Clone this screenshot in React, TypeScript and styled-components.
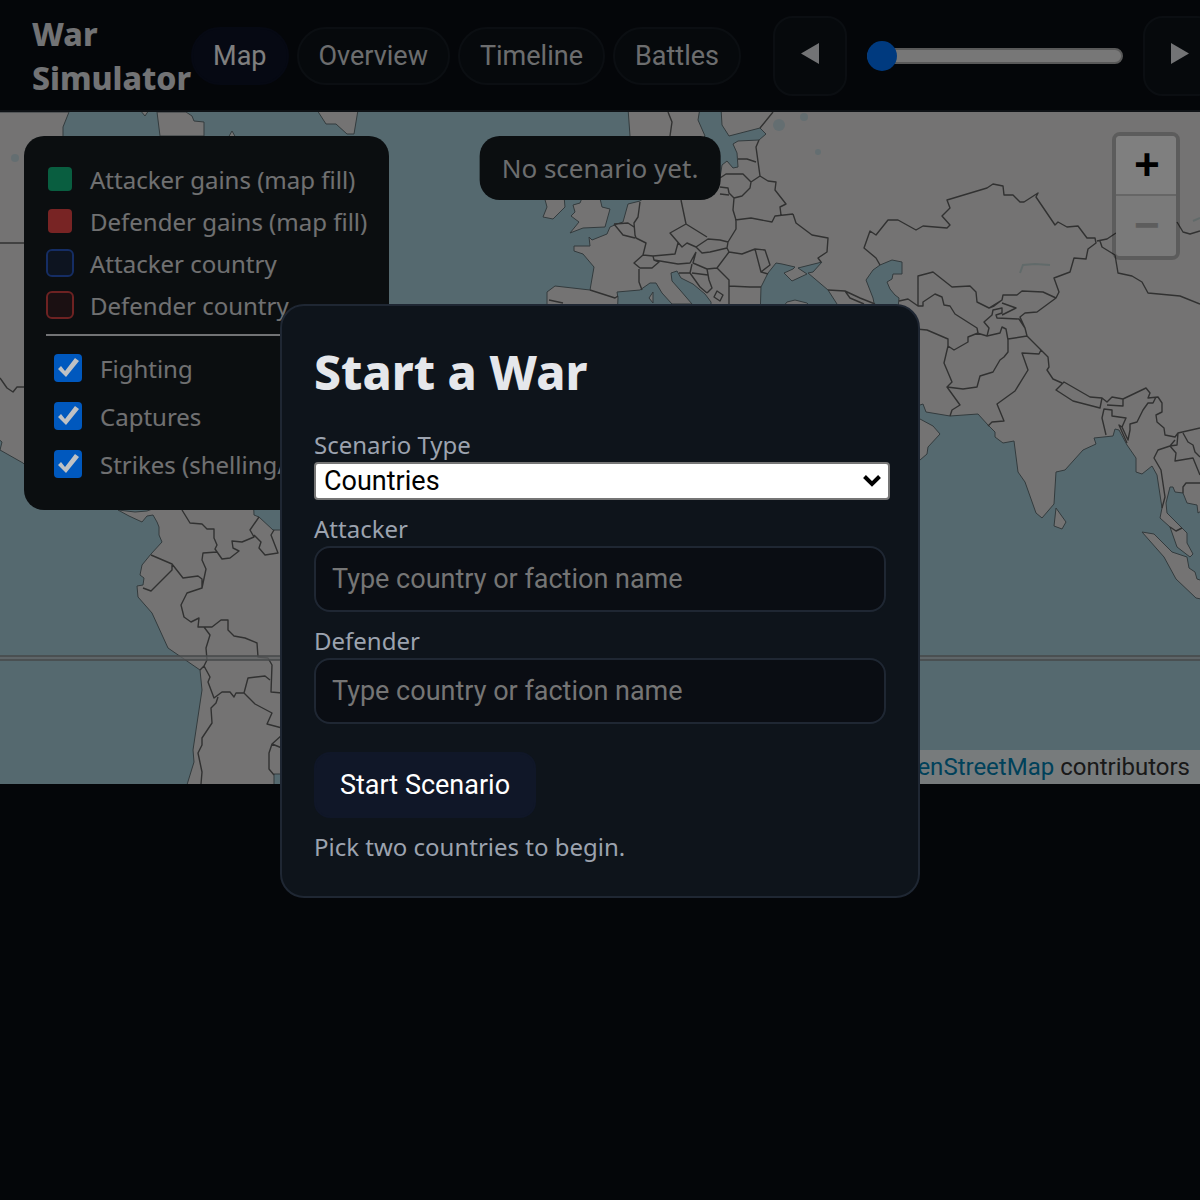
import React, { useState } from "react";
import styled, { createGlobalStyle } from "styled-components";

const ui = `"Noto Sans", sans-serif`;
const control = `Roboto, sans-serif`;

const GlobalStyle = createGlobalStyle`
  * { box-sizing: border-box; }
  html, body { margin: 0; background: #090c12; }
  body {
    min-height: 100vh;
    overflow-x: hidden;
    color: #e5e7eb;
    font-family: ${ui};
    font-size: 24px;
  }
  button, input, select { font-family: ${control}; font-size: 27px; }
`;

const Header = styled.header`
  display: flex;
  align-items: center;
  min-height: 112px;
  padding: 2px 32px 0;
  background: #090c12;
  border-bottom: 2px solid #1f242c;
  overflow: hidden;
`;

const Title = styled.h1`
  flex: 1 1 0;
  margin: 0;
  font-size: 32px;
  font-weight: 800;
  line-height: 44px;
`;

const HeaderControls = styled.div`
  display: flex;
  flex: none;
  align-items: center;
  gap: 32px;
`;

const Nav = styled.nav`
  display: flex;
  gap: 8px;
`;

const NavButton = styled.button<{ $active?: boolean }>`
  height: 58px;
  padding: 0 20px;
  border: 2px solid ${(p) => (p.$active ? "#0c1226" : "#161d24")};
  border-radius: 29px;
  background: ${(p) => (p.$active ? "#0c1226" : "#0c1218")};
  color: ${(p) => (p.$active ? "#ffffff" : "#d8dadd")};
`;

const Playback = styled.div`
  display: flex;
  align-items: center;
  gap: 20px;
`;

const StepButton = styled.button`
  width: 74px;
  height: 80px;
  padding: 0 0 4px;
  border: 2px solid #161d24;
  border-radius: 20px;
  background: #0c1218;
  color: #e5e7eb;
  display: grid;
  place-items: center;
`;

const Range = styled.input`
  appearance: none;
  width: 256px;
  height: 32px;
  margin: 0;
  background: transparent;
  &::-webkit-slider-runnable-track {
    height: 16px;
    border: 2px solid #b2b2b2;
    border-radius: 8px;
    background: #efefef;
  }
  &::-webkit-slider-thumb {
    appearance: none;
    width: 30px;
    height: 30px;
    margin-top: -9px;
    margin-left: -2px;
    border-radius: 50%;
    background: #0075ff;
  }
`;

const MapArea = styled.main`
  position: relative;
  height: 56vh;
  overflow: hidden;
  background: #aad3df;
`;

const MapDrawing = styled.svg`
  display: block;
  width: 100%;
  height: 100%;
`;

const Legend = styled.section`
  position: absolute;
  top: 24px;
  left: 24px;
  padding: 22px;
  border-radius: 20px;
  background: #161c21;
  color: #e0e1e3;
`;

const LegendRow = styled.div`
  display: flex;
  align-items: center;
  gap: 16px;
  height: 42px;
`;

const Swatch = styled.span<{ $fill: string; $line?: string }>`
  width: 28px;
  height: 28px;
  border: 2px solid ${(p) => p.$line ?? "transparent"};
  border-radius: 6px;
  background: ${(p) => p.$fill} padding-box;
`;

const Rule = styled.hr`
  height: 2px;
  margin: 8px 0;
  border: 0;
  background: #e5e7eb;
`;

const CheckRow = styled.label`
  display: flex;
  align-items: center;
  gap: 18px;
  height: 48px;
  padding-left: 8px;
`;

const CheckBox = styled.input`
  appearance: none;
  position: relative;
  z-index: 11;
  width: 28px;
  height: 28px;
  margin: 0;
  border-radius: 4px;
  background: #ffffff;
  &:checked { background: #0058be; }
  &:checked::before {
    content: "";
    display: block;
    width: 28px;
    height: 28px;
    background: #bfc1c4;
    clip-path: polygon(4px 15px, 7px 12px, 11px 17px, 21px 4px, 25px 7px, 12px 23px);
  }
`;

const Status = styled.div`
  position: absolute;
  top: 24px;
  left: 50%;
  transform: translateX(-50%);
  padding: 14px 22px;
  border-radius: 20px;
  background: #161c21;
  color: #d8dadd;
  font-size: 26px;
  line-height: 36px;
  white-space: nowrap;
`;

const ZoomBar = styled.div`
  position: absolute;
  top: 20px;
  right: 20px;
  display: flex;
  flex-direction: column;
  border: 4px solid rgba(0, 0, 0, 0.2);
  border-radius: 8px;
`;

const ZoomButton = styled.button`
  width: 60px;
  height: 60px;
  padding: 4px 0 0 2px;
  border: 0;
  background: #ffffff;
  color: #000000;
  font: bold 44px/56px "Liberation Mono", monospace;
  &:first-child { border-bottom: 2px solid #cccccc; border-radius: 4px 4px 0 0; }
  &:disabled { background: #f4f4f4; color: #bbbbbb; border-radius: 0 0 4px 4px; }
`;

const Attribution = styled.div`
  position: absolute;
  right: 0;
  bottom: 0;
  padding: 0 10px;
  background: rgba(255, 255, 255, 0.8);
  color: #333333;
  font-family: ${control};
  font-size: 24px;
  line-height: 34px;
  white-space: nowrap;
  a { color: #0082b4; text-decoration: none; }
`;

const Backdrop = styled.div`
  position: fixed;
  inset: 0;
  z-index: 10;
  background: rgba(0, 0, 0, 0.5);
`;

const DialogLayer = styled.div`
  position: fixed;
  inset: 0;
  z-index: 12;
  display: grid;
  place-items: center;
  padding-top: 2px;
`;

const Dialog = styled.form`
  width: 640px;
  max-width: 100%;
  padding: 32px;
  border: 2px solid #1f2733;
  border-radius: 24px;
  background: #0e141b;
`;

const DialogTitle = styled.h2`
  margin: 0 0 22px;
  font-size: 48px;
  font-weight: 800;
  line-height: 68px;
`;

const Fields = styled.div`
  display: grid;
  gap: 12px;
`;

const Field = styled.div`
  display: grid;
`;

const FieldLabel = styled.label`
  color: #9ca3af;
  line-height: 34px;
`;

const SelectWrap = styled.div`
  position: relative;
  width: calc(100% + 4px);
  svg {
    position: absolute;
    top: 13px;
    right: 9px;
    pointer-events: none;
  }
`;

const Select = styled.select`
  display: block;
  appearance: none;
  width: 100%;
  height: 38px;
  padding: 0 8px;
  border: 2px solid #767676;
  border-radius: 4px;
  background: #ffffff;
  color: #000000;
`;

const TextInput = styled.input`
  width: 100%;
  height: 66px;
  padding: 0 16px;
  border: 2px solid #1f2733;
  border-radius: 16px;
  background: #0a0d13;
  color: #e5e7eb;
  &::placeholder { color: #757575; }
`;

const SubmitButton = styled.button`
  height: 66px;
  margin: 28px 0 12px;
  padding: 0 24px;
  border: 2px solid #101728;
  border-radius: 16px;
  background: #101728;
  color: #ffffff;
`;

const Hint = styled.p`
  margin: 0;
  color: #9ca3af;
  line-height: 34px;
`;

const land = [
  // North America
  "M-4 112L69 112L63 127L63 136L80 300L40 480L23 463L0 450L2 442L-4 437Z",
  "M140 110L145 116L149 110Z",
  "M157 112L160 136L204 136L204 122L194 121L192 116L186 112Z",
  "M228 138L232 131L236 138Z",
  // Greenland
  "M317 110L326 124L336 124L347 134L354 134L358 110Z",
  // South America
  "M118 510L129 516L142 522L147 516L153 515L157 522L159 527L159 535L162 542L151 554L142 565L140 575L144 578L143 585L137 586L138 597L152 613L168 648L200 670L202 690L193 750L194 762L186 788L274 788L274 774L281 774L290 784L290 530L273 530L259 517L254 515L253 490L160 490L155 508L147 511L135 512Z",
  // Scandinavia
  "M628 108L630 136L640 150L690 150L705 136L698 120L700 108Z",
  // Eurasia
  "M721 108L722 125L729 136L760 128L766 134L759 140L738 141L733 144L737 153L738 167L733 168L727 161L722 165L720 178L700 192L670 196L655 190L640 201L628 204L623 222L617 224L610 227L607 234L592 240L589 237L590 246L574 246L574 251L583 254L594 267L590 290L555 286L547 292L547 320L617 320L618 298L617 292L640 290L650 283L656 283L662 293L672 304L692 304L680 290L672 281L671 273L677 271L681 278L693 284L705 294L711 302L711 320L760 320L761 287L768 273L776 263L782 264L795 267L793 269L784 273L792 281L807 274L798 268L818 263L822 262L813 272L808 273L828 290L837 304L840 420L920 405L923 404L926 412L950 416L978 414L988 425L995 432L995 437L1003 443L1014 441L1018 472L1025 482L1036 513L1042 518L1054 504L1056 472L1065 470L1083 450L1096 444L1094 438L1113 436L1115 429L1119 430L1127 445L1136 458L1136 472L1142 474L1152 466L1157 475L1162 508L1160 518L1170 527L1177 547L1190 557L1193 554L1187 543L1187 533L1182 528L1167 513L1166 503L1170 487L1173 487L1175 492L1183 493L1187 503L1197 505L1198 513L1206 508L1206 108Z",
  // British Isles
  "M582 198L580 203L573 205L575 212L571 216L579 222L570 233L583 228L605 227L610 209L602 207L598 190Z",
  "M544 196L547 207L543 217L553 219L565 207L564 196Z",
  // Corsica and Anatolia
  "M653 292L649 298L653 303Z",
  "M782 308L787 302L795 300L807 303L812 308Z",
  // Arabia
  "M910 414L920 419L933 426L940 434L928 447L927 454L920 460L910 462Z",
  // Sri Lanka and Sumatra
  "M1056 508L1066 522L1062 529L1054 526Z",
  "M1142 532L1154 534L1172 552L1187 557L1189 568L1195 572L1197 579L1206 582L1206 600L1196 598L1176 579L1164 557Z",
].join("");

const caspian =
  "M880 265L892 260L902 262L902 274L893 274L892 279L887 282L890 289L895 295L899 298L898 308L875 308L873 298L866 280L873 270Z";

const borders = [
  // Americas
  "M0 243H30M0 378L7 388L13 392L17 387L24 387",
  "M182 510L190 523L202 524L207 529L214 529L214 538L217 545L215 549L222 559L230 558L239 551L233 548L232 541L242 542L254 537L250 530L259 517",
  "M254 535L261 542L259 548L265 555L278 553L271 535L274 530",
  "M151 555L172 564L183 578L198 576L202 579L202 588L206 569L202 560L203 553L217 552",
  "M172 565L172 570L151 591L143 588",
  "M202 588L187 593L181 605L184 617L191 622L199 618L198 627L212 627L221 620L228 620L228 630L234 636L245 638L257 643L258 657L268 658L272 665L271 692L282 693",
  "M204 627L210 635L206 648L207 660L204 666L200 670M204 666L210 677L208 682L214 698L222 692L230 692L234 697L236 693L244 693L248 678L265 676L270 680",
  "M244 693L255 704L272 713L267 724L282 728",
  "M218 697L216 703L211 708L212 723L202 738L202 745L198 753L202 772L201 784",
  "M282 735L272 744L282 748M272 744L269 753L269 769L274 775",
  // Northern and eastern Europe
  "M668 112L672 122L670 136M760 128L773 112M759 140L756 147L760 176M738 159L747 159L756 162",
  "M720 178L726 174L743 174L751 182L760 176M751 182L750 188L742 196L734 198L729 193L728 188L720 187M720 194L729 195",
  "M734 198L733 210L736 220L736 229L728 242L727 248M735 220L751 218L772 222L775 216L793 214",
  "M760 176L768 181L776 182L775 190L786 204L780 207L781 215M793 214L796 223L812 235L828 238L827 252L818 258L821 262",
  // Central Europe
  "M681 200L686 224L707 237M686 224L670 233L682 247L687 243L696 247L708 239L720 240L728 242L727 248L710 252L702 253L696 247",
  "M696 252L693 263L707 269L717 268L729 252M678 243L675 254L653 256L654 260L678 264L690 263L696 252",
  "M640 202L638 217L634 223L635 235L636 238L646 243L643 255L653 256M614 224L628 223L634 227M614 224L623 235L635 238",
  "M643 255L634 263L640 268L652 268L659 262L654 260M639 269L639 282L642 290M590 290L615 298L618 296M549 300L563 303",
  "M727 248L729 252L742 254L755 249L765 250L770 265L761 272L755 249M761 272L768 274M729 286L750 287L761 287M717 268L729 280L729 304",
  "M707 269L709 280L712 288L707 293M679 273L690 273L692 264M692 273L708 275M690 273L700 287L707 293M717 291L723 295L720 301L714 297Z",
  "M828 290L845 291L860 298L875 304M845 291L850 298L864 304",
  // Kazakhstan
  "M880 265L876 258L870 253L864 248L870 231L876 235L888 220L898 220L916 230L923 226L947 228L950 225L942 216L950 208L947 200L987 188L993 184L1003 186L1004 195L1013 195L1020 202L1024 202L1038 193L1036 197L1055 225L1058 222L1067 227L1078 226L1087 238L1095 238L1096 243L1088 249L1086 259L1074 258L1070 272L1054 278L1059 292L1056 298L1043 292L1022 291L1017 295L1003 295L1002 300L989 308L977 302L976 292L970 286L952 287L933 272L918 276L918 306",
  // Mongolia and China
  "M1097 241L1107 239L1116 233M1177 222L1183 232L1190 234L1200 231M1100 241L1102 247L1115 255L1118 273L1132 276L1142 282L1148 293L1180 296L1200 304",
  // Central Asia
  "M899 301L908 299L918 306L923 306L923 302L935 294L942 297L944 305L950 306L955 314L977 328L978 333L968 337L968 342L954 350L948 346L948 339L927 330L916 329",
  "M948 346L944 363L952 382L947 387L960 405L952 410L950 416M947 387L963 389L977 387L980 376L993 372L1000 360L1004 357L1008 352L1008 340L1006 329L1002 327L1000 333L987 336L977 333",
  "M987 336L989 328L984 322L992 315L993 310L1002 308L1002 313L996 315L997 318L1019 319L1025 328L1027 336L1008 339M1002 303L1016 308L1002 315M1056 298L1037 312L1025 313L1020 317L1025 328M1002 300L994 306L989 308",
  // South Asia
  "M1027 336L1041 350L1048 357L1049 367L1047 370L1053 379L1062 383M1041 350L1039 354L1022 353L1028 370L1015 391L997 404L1004 421L992 422L988 426",
  "M1064 382L1056 390L1073 401L1100 408L1102 398L1090 397ZM1102 398L1107 402L1112 397L1123 399L1123 406L1107 405M1123 399L1146 388L1150 393L1148 398L1158 397L1162 403L1162 412L1156 415L1157 422L1164 428L1165 435L1175 437L1178 433L1200 428",
  "M1156 397L1153 403L1148 403L1143 410L1137 422L1130 424L1130 430L1128 440L1122 427L1126 418L1112 416L1112 410L1104 409L1102 418L1106 435M1122 427L1119 425L1127 443",
  // Southeast Asia
  "M1175 440L1170 446L1158 450L1154 458L1161 470L1165 497L1162 508M1178 433L1177 445L1170 446L1176 453L1175 461L1193 458L1200 475M1183 433L1188 442L1193 445L1195 452L1200 457M1200 483L1186 483L1183 487L1183 493M1170 527L1176 531L1182 528",
].join("");

function WorldMap() {
  return (
    <MapDrawing viewBox="0 112 1200 672" preserveAspectRatio="xMidYMin slice" aria-label="World map">
      <rect x="-4" y="112" width="1208" height="672" fill="#aad3df" />
      <path d={land} fill="#e8e7e6" stroke="#66757a" strokeWidth="1" />
      <path d={caspian} fill="#aad3df" stroke="#66757a" strokeWidth="1" />
      <g fill="none" stroke="#b4cccc" strokeWidth="2" opacity="0.7">
        <path d="M1020 273L1023 265L1035 264L1050 265" />
        <path d="M1193 221L1200 218" />
      </g>
      <g fill="#aad3df" opacity="0.5">
        <circle cx="779" cy="125" r="6" />
        <circle cx="804" cy="117" r="4" />
        <circle cx="818" cy="152" r="3" />
        <circle cx="15" cy="158" r="4" />
      </g>
      <path d={borders} fill="none" stroke="#626262" strokeWidth="1.4" strokeLinejoin="round" />
      <path d="M0 658H1200" stroke="#c4c8ca" strokeWidth="4" opacity="0.7" />
      <path d="M0 656H1200M0 660H1200" stroke="#8a9092" strokeWidth="1.5" />
    </MapDrawing>
  );
}

const legendItems = [
  { text: "Attacker gains (map fill)", fill: "#12bd80" },
  { text: "Defender gains (map fill)", fill: "#f04848" },
  { text: "Attacker country", fill: "#1a2840", line: "#2a5bc8" },
  { text: "Defender country", fill: "#362124", line: "#dc4444" },
];

const layers = ["Fighting", "Captures", "Strikes (shelling/air)"];
const pages = ["Map", "Overview", "Timeline", "Battles"];

export default function App() {
  const [page, setPage] = useState("Map");
  return (
    <>
      <GlobalStyle />
      <Header>
        <Title>War Simulator</Title>
        <HeaderControls>
          <Nav>
            {pages.map((name) => (
              <NavButton key={name} type="button" $active={name === page} onClick={() => setPage(name)}>
                {name}
              </NavButton>
            ))}
          </Nav>
          <Playback>
            <StepButton type="button" aria-label="Previous turn">
              <svg width="20" height="22" viewBox="0 0 20 22"><path d="M19 0V21L1 10.5Z" fill="currentColor" /></svg>
            </StepButton>
            <Range type="range" min="0" max="100" defaultValue="0" aria-label="Turn" />
            <StepButton type="button" aria-label="Next turn">
              <svg width="20" height="22" viewBox="0 0 20 22"><path d="M1 0V21L19 10.5Z" fill="currentColor" /></svg>
            </StepButton>
          </Playback>
        </HeaderControls>
      </Header>

      <MapArea>
        <WorldMap />
        <Legend>
          {legendItems.map((item) => (
            <LegendRow key={item.text}>
              <Swatch $fill={item.fill} $line={item.line} />
              <span>{item.text}</span>
            </LegendRow>
          ))}
          <Rule />
          {layers.map((name) => (
            <CheckRow key={name}>
              <CheckBox type="checkbox" defaultChecked />
              <span>{name}</span>
            </CheckRow>
          ))}
        </Legend>
        <Status>No scenario yet.</Status>
        <ZoomBar>
          <ZoomButton type="button" aria-label="Zoom in">+</ZoomButton>
          <ZoomButton type="button" aria-label="Zoom out" disabled>−</ZoomButton>
        </ZoomBar>
        <Attribution>
          <a href="#leaflet">Leaflet</a> | © <a href="#osm">OpenStreetMap</a> contributors
        </Attribution>
      </MapArea>

      <Backdrop />
      <DialogLayer>
        <Dialog role="dialog" aria-labelledby="dialog-title" onSubmit={(e) => e.preventDefault()}>
          <DialogTitle id="dialog-title">Start a War</DialogTitle>
          <Fields>
            <Field>
              <FieldLabel htmlFor="type">Scenario Type</FieldLabel>
              <SelectWrap>
                <Select id="type" defaultValue="Countries">
                  <option>Countries</option>
                  <option>Factions</option>
                </Select>
                <svg width="18" height="12" viewBox="0 0 18 12" fill="none" stroke="#000" strokeWidth="4">
                  <path d="M1.5 1.5L9 9L16.5 1.5" />
                </svg>
              </SelectWrap>
            </Field>
            <Field>
              <FieldLabel htmlFor="attacker">Attacker</FieldLabel>
              <TextInput id="attacker" placeholder="Type country or faction name" />
            </Field>
            <Field>
              <FieldLabel htmlFor="defender">Defender</FieldLabel>
              <TextInput id="defender" placeholder="Type country or faction name" />
            </Field>
          </Fields>
          <SubmitButton type="submit">Start Scenario</SubmitButton>
          <Hint>Pick two countries to begin.</Hint>
        </Dialog>
      </DialogLayer>
    </>
  );
}
